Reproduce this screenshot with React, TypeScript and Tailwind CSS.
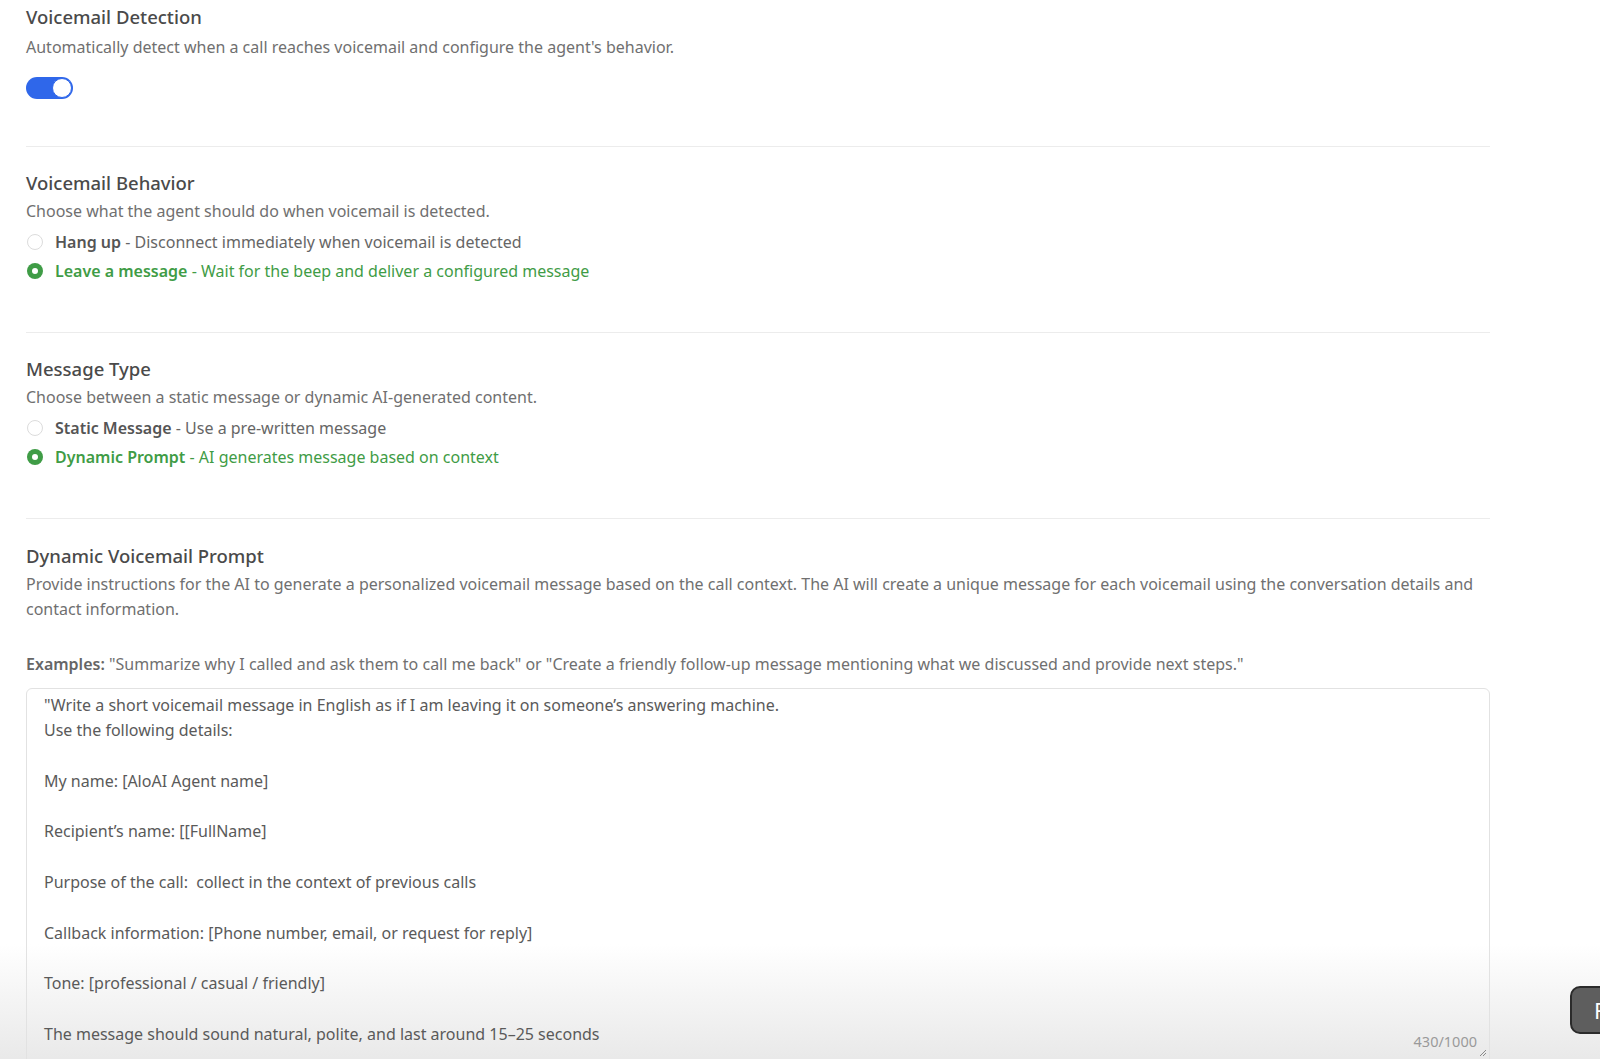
import { useState } from "react";

const PROMPT = `"Write a short voicemail message in English as if I am leaving it on someone’s answering machine.
Use the following details:

My name: [AloAI Agent name]

Recipient’s name: [[FullName]

Purpose of the call:  collect in the context of previous calls

Callback information: [Phone number, email, or request for reply]

Tone: [professional / casual / friendly]

The message should sound natural, polite, and last around 15–25 seconds`;

type Option = { id: string; title: string; desc: string };

function Radio({ checked }: { checked: boolean }) {
  if (checked) {
    return (
      <span className="flex h-[16px] w-[16px] shrink-0 items-center justify-center rounded-full bg-[#3f9c46]">
        <span className="h-[6px] w-[6px] rounded-full bg-white" />
      </span>
    );
  }
  return <span className="h-[16px] w-[16px] shrink-0 rounded-full border border-[#dcdcdc] bg-white" />;
}

function RadioGroup({ options, value, onChange }: { options: Option[]; value: string; onChange: (v: string) => void }) {
  return (
    <div className="mt-[4px] flex flex-col">
      {options.map((o) => {
        const on = o.id === value;
        return (
          <button
            key={o.id}
            onClick={() => onChange(o.id)}
            className={`flex h-[29.5px] items-center gap-[12px] pl-[1px] text-left text-[16px] ${on ? "text-[#3f9c46]" : "text-[#666]"}`}
          >
            <Radio checked={on} />
            <span>
              <span className={`font-semibold ${on ? "text-[#3f9c46]" : "text-[#555]"}`}>{o.title}</span> - {o.desc}
            </span>
          </button>
        );
      })}
    </div>
  );
}

function Heading({ children }: { children: React.ReactNode }) {
  return <h3 className="h-[24px] text-[18.5px] font-medium leading-[24px] text-[#4a4a4a]">{children}</h3>;
}

function Desc({ children }: { children: React.ReactNode }) {
  return <p className="mt-[4px] text-[16px] leading-[24px] text-[#707070]">{children}</p>;
}

export default function App() {
  const [enabled, setEnabled] = useState(true);
  const [behavior, setBehavior] = useState("leave");
  const [type, setType] = useState("dynamic");

  return (
    <div className="relative h-[1059px] w-[1600px] overflow-hidden bg-white font-['Noto_Sans',sans-serif]">
      {/* bottom fade behind the content */}
      <div className="pointer-events-none absolute inset-x-0 bottom-0 h-[115px] bg-gradient-to-b from-white to-[#e9e9e9]" />

      <div className="relative w-[1490px] pl-[26px]">
        {/* detection */}
        <section className="border-b border-[#ececec] pb-[47px] pt-[5px]">
          <Heading>Voicemail Detection</Heading>
          <p className="mt-[6px] text-[16px] leading-[24px] text-[#707070]">
            Automatically detect when a call reaches voicemail and configure the agent's behavior.
          </p>
          <button
            onClick={() => setEnabled(!enabled)}
            className={`mt-[18px] flex h-[22px] w-[47px] items-center rounded-full p-[1px] ${enabled ? "justify-end bg-[#2f67ea]" : "justify-start bg-[#d6d6d6]"}`}
          >
            <span className="h-[20px] w-[20px] rounded-full border border-[#2f67ea] bg-white" />
          </button>
        </section>

        {/* behavior */}
        <section className="border-b border-[#ececec] pb-[46px] pt-[24px]">
          <Heading>Voicemail Behavior</Heading>
          <Desc>Choose what the agent should do when voicemail is detected.</Desc>
          <RadioGroup
            value={behavior}
            onChange={setBehavior}
            options={[
              { id: "hang", title: "Hang up", desc: "Disconnect immediately when voicemail is detected" },
              { id: "leave", title: "Leave a message", desc: "Wait for the beep and deliver a configured message" },
            ]}
          />
        </section>

        {/* message type */}
        <section className="border-b border-[#ececec] pb-[46px] pt-[24px]">
          <Heading>Message Type</Heading>
          <Desc>Choose between a static message or dynamic AI-generated content.</Desc>
          <RadioGroup
            value={type}
            onChange={setType}
            options={[
              { id: "static", title: "Static Message", desc: "Use a pre-written message" },
              { id: "dynamic", title: "Dynamic Prompt", desc: "AI generates message based on context" },
            ]}
          />
        </section>

        {/* prompt */}
        <section className="pt-[25px]">
          <Heading>Dynamic Voicemail Prompt</Heading>
          <p className="mt-[4px] text-[16px] leading-[25px] text-[#707070]">
            Provide instructions for the AI to generate a personalized voicemail message based on the call context. The AI will create a unique
            message for each voicemail using the conversation details and contact information.
          </p>
          <p className="mt-[30px] text-[16px] leading-[24px] text-[#707070]">
            <span className="font-semibold text-[#666]">Examples:</span> "Summarize why I called and ask them to call me back" or "Create a
            friendly follow-up message mentioning what we discussed and provide next steps."
          </p>
          <div className="relative mt-[12px] h-[420px] rounded-md border border-[#e2e2e2] pl-[17px] pr-[20px] pt-[4px]">
            <div className="whitespace-pre-wrap text-[16px] leading-[25.3px] text-[#5a5a5a]">{PROMPT}</div>
            <span className="absolute right-[12px] top-[342px] text-[14.5px] text-[#9a9a9a]">430/1000</span>
            <svg className="absolute right-[2px] top-[360px]" width="8" height="8" viewBox="0 0 8 8">
              <path d="M1 7 L7 1 M4 7 L7 4" stroke="#8a8a8a" strokeWidth="1" />
            </svg>
          </div>
        </section>
      </div>

      {/* floating button */}
      <button className="absolute left-[1570px] top-[986px] flex h-[48px] w-[160px] items-center rounded-[10px] border-2 border-[#2b2b2b] bg-[#5e5e5e] pl-[22px] text-[22px] text-white">
        Feedback
      </button>
    </div>
  );
}
